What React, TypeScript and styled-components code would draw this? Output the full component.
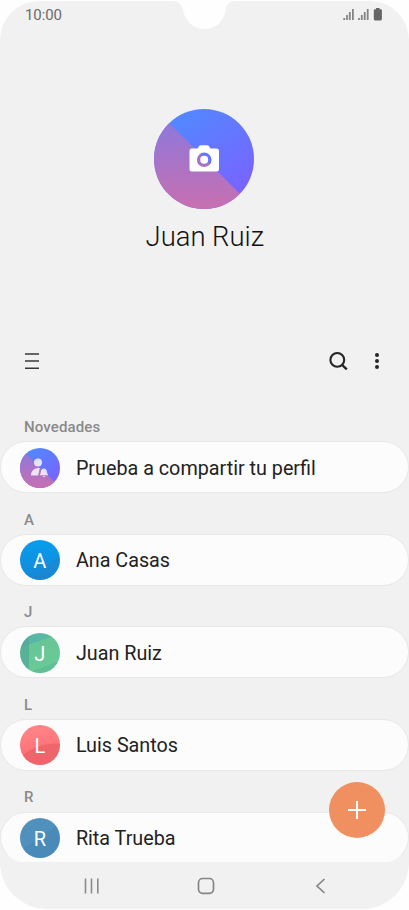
import React from 'react';
import styled, { createGlobalStyle } from 'styled-components';

const GlobalStyle = createGlobalStyle`
  * { box-sizing: border-box; }
  body { margin: 0; background: #fff; font-family: Roboto, 'Liberation Sans', sans-serif; }
`;

const Page = styled.div`
  width: 409px;
  height: 910px;
  padding: 1px 0;
  background: #fefefe;
`;

const Phone = styled.main`
  position: relative;
  display: flex;
  flex-direction: column;
  width: 409px;
  height: 908px;
  overflow: hidden;
  border-radius: 39px 39px 47px 47px;
  background: #f1f1f1;
`;

const Notch = styled.svg`
  position: absolute;
  top: -1px;
  left: 168px;
  width: 73px;
  height: 30px;
`;

const StatusBar = styled.header`
  display: flex;
  justify-content: space-between;
  height: 28px;
  padding: 0 26px 0 25px;
`;

const Clock = styled.time`
  color: #6b6b6b;
  font-size: 15px;
  line-height: 29px;
  letter-spacing: -0.1px;
`;

const StatusIcons = styled.svg`
  width: 40px;
  height: 14px;
  margin-top: 7px;
`;

const Profile = styled.section`
  display: flex;
  flex-direction: column;
  align-items: center;
  height: 312px;
  padding: 79.5px 0.4px 0 0;
`;

const ProfileName = styled.h1`
  margin: 10.5px 0 0 1px;
  color: #111;
  font-size: 27.4px;
  font-weight: 300;
  line-height: 36px;
  white-space: nowrap;
`;

const Toolbar = styled.nav`
  display: flex;
  align-items: center;
  height: 40px;
  padding: 0 29px 0 24px;
`;

const IconButton = styled.button<{ $push?: boolean; $gap?: number }>`
  display: flex;
  margin: 0 ${p => p.$gap ?? 0}px 0 ${p => (p.$push ? 'auto' : 0)};
  padding: 0;
  border: 0;
  background: none;
`;

const ContactList = styled.div`
  flex: none;
  height: 481px;
  padding-top: 19.4px;
  overflow: hidden;
`;

const SectionTitle = styled.h2`
  height: 40.9px;
  margin: 0;
  padding: 17.6px 0 0 24px;
  color: #8a8a8a;
  font-size: 15px;
  font-weight: 500;
  line-height: 19px;
  letter-spacing: 0.12px;
`;

const ContactRow = styled.div<{ $last?: boolean }>`
  display: flex;
  align-items: center;
  width: 408.5px;
  height: ${p => (p.$last ? 51 : 51.7)}px;
  padding: ${p => (p.$last ? 2 : 1)}px 0 0 18.5px;
  border: 1px solid #e8e8e8;
  border-bottom-color: ${p => (p.$last ? '#f6f6f6' : '#e8e8e8')};
  border-radius: 26px;
  background: #fcfcfc;
`;

const ContactName = styled.span`
  margin: 2px 0 0 16.4px;
  color: #222;
  font-size: 19.75px;
  line-height: 24px;
  white-space: nowrap;
`;

const Avatar = styled.div<{ $fill: string }>`
  display: flex;
  align-items: center;
  justify-content: center;
  width: 40px;
  height: 40px;
  padding: 2px 0 0 0.6px;
  border-radius: 50%;
  background: ${p => p.$fill};
  color: #fff;
  font-size: 20px;
  line-height: 24px;
`;

const NavBar = styled.footer`
  display: flex;
  align-items: center;
  justify-content: space-between;
  height: 47px;
  padding: 0 82px 0 84px;
`;

const AddButton = styled.button`
  position: absolute;
  top: 781.4px;
  left: 329.3px;
  display: flex;
  align-items: center;
  justify-content: center;
  width: 56px;
  height: 56px;
  padding: 0;
  border: 0;
  border-radius: 50%;
  background: #f09060;
`;

function ProfileDisc({ size, id, children }: { size: number; id: string; children: React.ReactNode }) {
  return (
    <svg width={size} height={size} viewBox="0 0 100 100">
      <defs>
        <linearGradient id={`${id}-blue`} x1="0.25" y1="0.05" x2="0.85" y2="0.85">
          <stop offset="0" stopColor="#5288ff" />
          <stop offset="1" stopColor="#7963ff" />
        </linearGradient>
        <linearGradient id={`${id}-pink`} x1="0" y1="0" x2="0" y2="1">
          <stop offset="0" stopColor="#8579e2" />
          <stop offset="1" stopColor="#c86fb0" />
        </linearGradient>
        <clipPath id={`${id}-clip`}><circle cx="50" cy="50" r="50" /></clipPath>
      </defs>
      <g clipPath={`url(#${id}-clip)`}>
        <rect width="100" height="100" fill={`url(#${id}-blue)`} />
        <path d="M0 0H1L100 99V100H0Z" fill={`url(#${id}-pink)`} />
      </g>
      {children}
    </svg>
  );
}

const contacts = [
  { name: 'Ana Casas', fill: 'linear-gradient(140deg, transparent 65%, #2084cd88 65%), linear-gradient(#079deb, #1488d9)' },
  { name: 'Juan Ruiz', fill: 'linear-gradient(90deg, #50a797aa 22%, transparent 23%), linear-gradient(160deg, #58b8a5 27%, #68c596 28%, #68ca96 77%, #60bf93 78%)' },
  { name: 'Luis Santos', fill: 'radial-gradient(circle at 90% 180%, #ee656b 0 53px, transparent 54px), linear-gradient(165deg, #ff8385 20%, #ff6f75 65%)' },
  { name: 'Rita Trueba', fill: 'linear-gradient(145deg, #5090bd 48%, #498ab8 49%)' },
];

export default function App() {
  return (
    <Page>
      <GlobalStyle />
      <Phone>
        <StatusBar>
          <Clock>10:00</Clock>
          <StatusIcons viewBox="343 8 40 14" fill="#858585">
            <path d="M343.3 18h1.8v2h-1.8zM346.1 15h1.8v5h-1.8zM348.9 12h1.8v8h-1.8zM352 9h1.8v11h-1.8zM358.1 18h1.8v2h-1.8zM360.9 15h1.8v5h-1.8zM363.8 12h1.8v8H363.8zM366.8 9h1.8v11H366.8z" />
            <path d="M376 8h3.6v1.2h1.2q1.1 0 1.1 1.1v8.6q0 1.5-1.5 1.5h-5.1q-1.5 0-1.5-1.5v-8.6q0-1.1 1.1-1.1h1.1z" fill="#666" />
          </StatusIcons>
        </StatusBar>
        <Notch viewBox="0 0 73 30">
          <path d="M0 0H73V1H68C60 1 58.5 6 57.8 10C56 21 48 29 36.8 29C25 29 17 21 15 10C14.2 6 12 1 4 1H0Z" fill="#fefefe" />
        </Notch>
        <Profile>
          <ProfileDisc size={100} id="profile">
            <path d="M43.5 39.5L45 37.3Q45.7 36.2 47 36.2H53Q54.3 36.2 55 37.3L56.5 39.5H62.5Q65 39.5 65 42V60Q65 62.5 62.5 62.5H38Q35.5 62.5 35.5 60V42Q35.5 39.5 38 39.5ZM50.2 43.5a7.3 7.3 0 1 0 0 14.6a7.3 7.3 0 1 0 0-14.6" fill="#fff" fillRule="evenodd" />
            <circle cx="50.2" cy="50.8" r="4" fill="#fff" />
          </ProfileDisc>
          <ProfileName>Juan Ruiz</ProfileName>
        </Profile>
        <Toolbar>
          <IconButton aria-label="Menú">
            <svg width="16" height="18" viewBox="0 0 16 18" stroke="#383838" strokeWidth="1.5">
              <path d="M1 2H15M1 9H15M1 16.2H15" />
            </svg>
          </IconButton>
          <IconButton aria-label="Buscar" $push $gap={26.5}>
            <svg width="20" height="20" viewBox="0 0 20 20" fill="none" stroke="#252525" strokeWidth="2.1">
              <circle cx="9.3" cy="8.9" r="6.9" />
              <path d="M14 13.8L18.8 18.3" strokeWidth="2.3" />
            </svg>
          </IconButton>
          <IconButton aria-label="Más opciones">
            <svg width="6" height="18" viewBox="0 0 6 18" fill="#252525">
              <circle cx="3" cy="3" r="2" /><circle cx="3" cy="9" r="2" /><circle cx="3" cy="15" r="2" />
            </svg>
          </IconButton>
        </Toolbar>
        <ContactList>
          <SectionTitle>Novedades</SectionTitle>
          <ContactRow>
            <ProfileDisc size={40} id="share">
              <g fill="#fff" fillOpacity="0.8">
                <circle cx="45" cy="36.5" r="10" />
                <path d="M27.5 69Q28 52 45 50H50Q48 53 47.5 60L45 69Z" />
                <path d="M49 68Q52 65 52 60C52 48 67.5 48 67.5 60Q67.5 65 71 68ZM56 70.5H64Q60 75 56 70.5Z" />
              </g>
            </ProfileDisc>
            <ContactName>Prueba a compartir tu perfil</ContactName>
          </ContactRow>
          {contacts.map((contact, index) => (
            <React.Fragment key={contact.name}>
              <SectionTitle>{contact.name[0]}</SectionTitle>
              <ContactRow $last={index === contacts.length - 1}>
                <Avatar $fill={contact.fill}>{contact.name[0]}</Avatar>
                <ContactName>{contact.name}</ContactName>
              </ContactRow>
            </React.Fragment>
          ))}
        </ContactList>
        <NavBar>
          <IconButton aria-label="Recientes">
            <svg width="16" height="16" viewBox="0 0 16 16" stroke="#8a8a8a" strokeWidth="1.6">
              <path d="M1.5 .5V15.5M7.5 .5V15.5M13.8 .5V15.5" />
            </svg>
          </IconButton>
          <IconButton aria-label="Inicio" $gap={4}>
            <svg width="18" height="18" viewBox="0 0 18 18" fill="none" stroke="#858585" strokeWidth="1.7">
              <rect x="1.5" y="1.5" width="15" height="14.8" rx="4.2" />
            </svg>
          </IconButton>
          <IconButton aria-label="Atrás">
            <svg width="12" height="16" viewBox="0 0 12 16" fill="none" stroke="#858585" strokeWidth="1.7">
              <path d="M9.5 1L2 8L9.5 15" />
            </svg>
          </IconButton>
        </NavBar>
        <AddButton aria-label="Añadir contacto">
          <svg width="18" height="18" viewBox="0 0 18 18" stroke="#fff" strokeWidth="2">
            <path d="M0 9H18M9 0V18" />
          </svg>
        </AddButton>
      </Phone>
    </Page>
  );
}
